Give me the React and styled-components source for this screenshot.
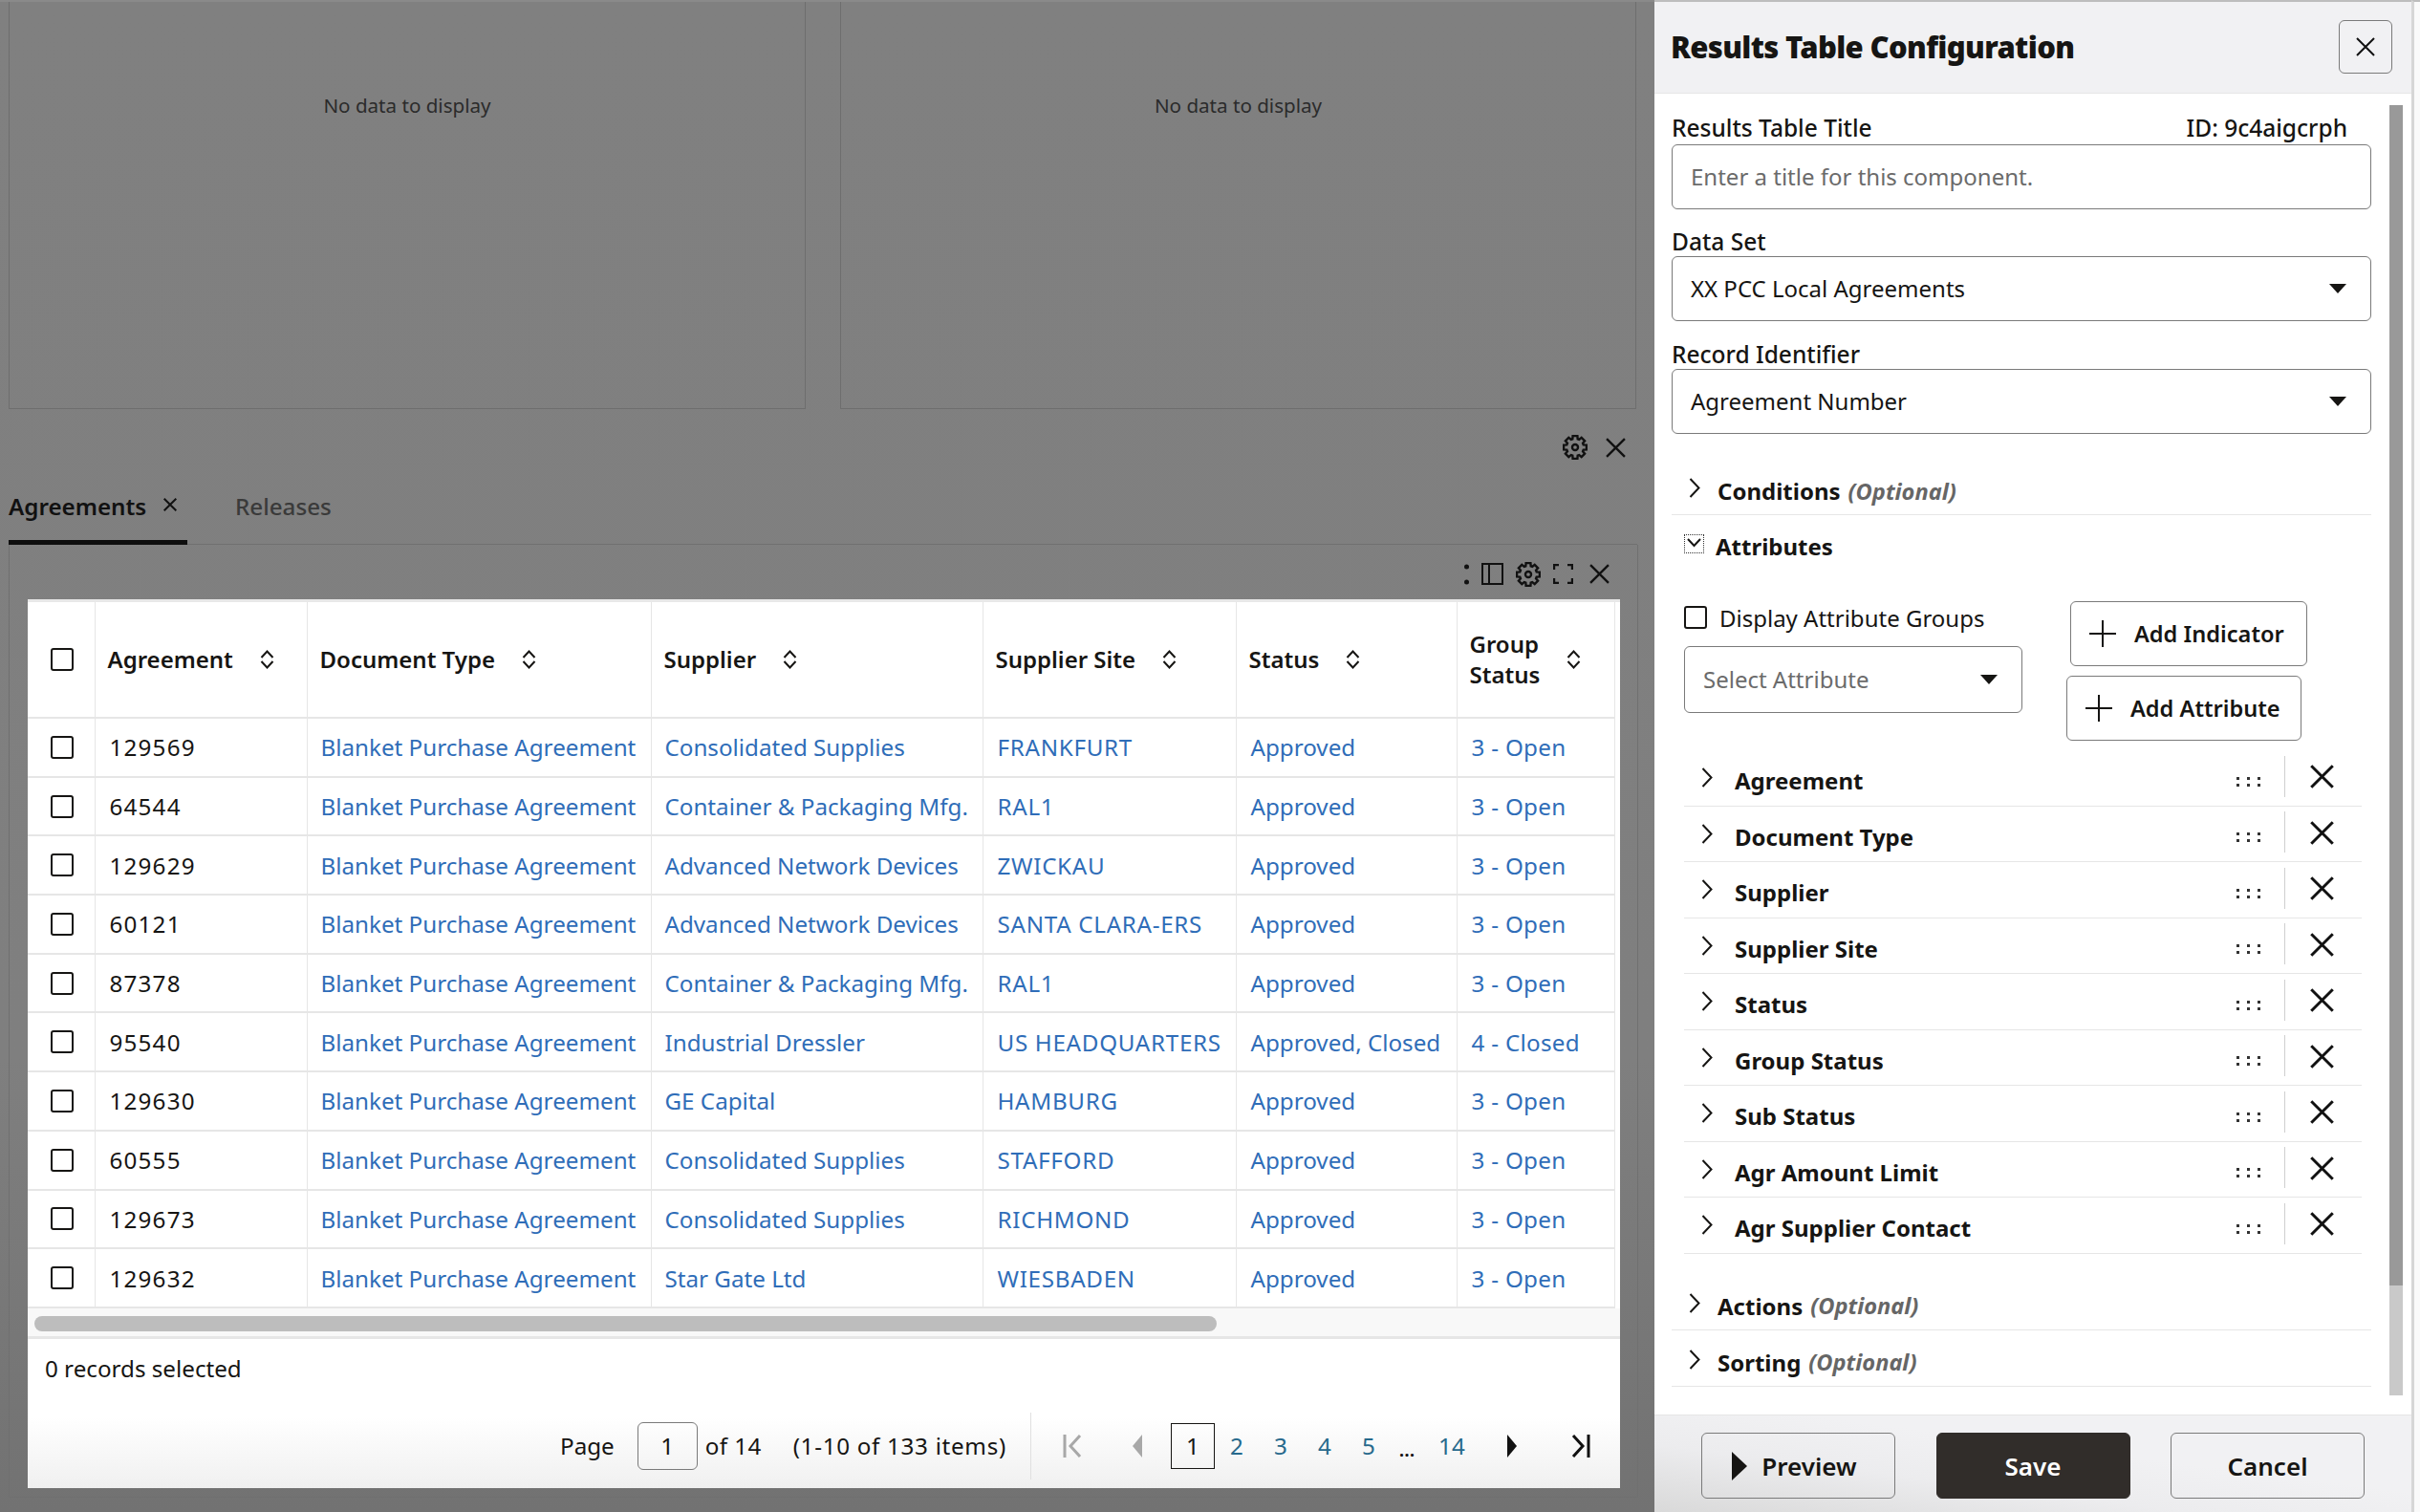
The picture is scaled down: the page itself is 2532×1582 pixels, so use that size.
import React from 'react'
import styled, { createGlobalStyle } from 'styled-components'

const FONT = '"Noto Sans", "Open Sans", sans-serif'

const rows = [
  ['129569', 'Consolidated Supplies', 'FRANKFURT', 'Approved', '3 - Open'],
  ['64544', 'Container & Packaging Mfg.', 'RAL1', 'Approved', '3 - Open'],
  ['129629', 'Advanced Network Devices', 'ZWICKAU', 'Approved', '3 - Open'],
  ['60121', 'Advanced Network Devices', 'SANTA CLARA-ERS', 'Approved', '3 - Open'],
  ['87378', 'Container & Packaging Mfg.', 'RAL1', 'Approved', '3 - Open'],
  ['95540', 'Industrial Dressler', 'US HEADQUARTERS', 'Approved, Closed', '4 - Closed'],
  ['129630', 'GE Capital', 'HAMBURG', 'Approved', '3 - Open'],
  ['60555', 'Consolidated Supplies', 'STAFFORD', 'Approved', '3 - Open'],
  ['129673', 'Consolidated Supplies', 'RICHMOND', 'Approved', '3 - Open'],
  ['129632', 'Star Gate Ltd', 'WIESBADEN', 'Approved', '3 - Open'],
]

const columns = [
  { title: 'Agreement', width: 222 },
  { title: 'Document Type', width: 360 },
  { title: 'Supplier', width: 347 },
  { title: 'Supplier Site', width: 265 },
  { title: 'Status', width: 231 },
  { title: <>Group<br />Status</>, width: 165 },
]

const attributes = ['Agreement', 'Document Type', 'Supplier', 'Supplier Site', 'Status', 'Group Status', 'Sub Status', 'Agr Amount Limit', 'Agr Supplier Contact']

const GlobalStyle = createGlobalStyle`
  html, body { margin: 0; padding: 0; }
  body { font-family: ${FONT}; color: #161513; }
  * { box-sizing: border-box; }
`

const Page = styled.div`
  width: 2532px;
  height: 1582px;
  overflow: hidden;
  display: flex;
  background: linear-gradient(#808080 0, #7f7f7f 70%, #727272 100%);
`

const Backdrop = styled.main`
  width: 1731px;
  flex: none;
  padding-left: 9px;
  padding-right: 18px;
  border-top: 2px solid #8a8a8a;
`

const ChartRow = styled.div`
  display: flex;
  gap: 36px;
  height: 426px;
`

const ChartPanel = styled.section`
  width: ${p => p.$w}px;
  border: 1px solid #6e6e6e;
  border-top: 0;
  padding-top: 94px;
  text-align: center;
  font-size: 20.6px;
  line-height: 28px;
  color: #2b2b2b;
`

const IconRow = styled.div`
  height: 80px;
  display: flex;
  justify-content: flex-end;
  align-items: center;
  gap: 19px;
  padding-right: 12px;
`

const Tabs = styled.div`
  display: flex;
  height: 62px;
  border-bottom: 1px solid #707070;
`

const Tab = styled.div`
  width: ${p => p.$w}px;
  height: 62px;
  display: flex;
  align-items: flex-start;
  padding-top: 6px;
  padding-left: ${p => p.$pad || 0}px;
  font-size: 24.2px;
  line-height: 32px;
  font-weight: ${p => (p.$active ? 600 : 500)};
  color: ${p => (p.$active ? '#111' : '#3a3a3a')};
  border-bottom: ${p => (p.$active ? '5px solid #0e0e0e' : '0')};
  gap: 18px;
  svg { margin-top: 7px; }
`

const ResultsBox = styled.section`
  width: 1705px;
  height: 997px;
  border: 1px solid #707070;
  border-top: 0;
  padding: 0 19px;
`

const BoxTools = styled.div`
  height: 57px;
  display: flex;
  justify-content: flex-end;
  align-items: center;
  gap: 13px;
  padding-right: 10px;
  padding-top: 4px;
`

const ToolClose = styled.span`
  display: flex;
  margin-left: 4px;
`

const Card = styled.div`
  width: 1666px;
  height: 930px;
  background: linear-gradient(#fff 0, #fff 92%, #f0f0f0 100%);
  border-top: 3px solid #e8e8e8;
  display: flex;
  flex-direction: column;
`

const Table = styled.table`
  border-collapse: collapse;
  table-layout: fixed;
  width: 1660px;
  font-size: 24.2px;
`

const Col = styled.col`
  width: ${p => p.$w}px;
`

const Th = styled.th`
  height: 121px;
  padding: 0 0 0 ${p => p.$pad || 13}px;
  border-right: 1px solid #e6e6e6;
  border-bottom: 2px solid #e6e6e6;
  text-align: left;
  font-weight: 600;
  font-size: 24px;
  line-height: 32px;
`

const HeadInner = styled.div`
  display: flex;
  align-items: center;
  gap: 28px;
`

const Td = styled.td`
  height: 61.7px;
  padding: 0 0 0 ${p => p.$pad || 14}px;
  border-right: 1px solid #e6e6e6;
  border-bottom: 2px solid #e6e6e6;
  white-space: nowrap;
  overflow: hidden;
  letter-spacing: ${p => p.$track || 0}px;
  color: ${p => (p.$link ? '#2f6db8' : '#161513')};
`

const Checkbox = styled.span`
  display: block;
  flex: none;
  width: 24px;
  height: 24px;
  border: 2px solid #161513;
  border-radius: 3px;
  background: #fff;
`

const ScrollTrack = styled.div`
  height: 32px;
  background: #f8f8f8;
  border-bottom: 3px solid #e6e6e6;
  padding: 8px 7px 0;
`

const ScrollThumb = styled.div`
  width: 1237px;
  height: 16px;
  border-radius: 8px;
  background: #bdbdbd;
`

const Selected = styled.div`
  padding: 15px 0 0 18px;
  font-size: 24.2px;
  line-height: 32px;
`

const Pager = styled.div`
  display: flex;
  align-items: center;
  height: 70px;
  margin-top: 30px;
  padding-left: 557px;
  font-size: 24.2px;
`

const PageInput = styled.div`
  width: 63px;
  height: 50px;
  margin: 0 8px 0 24px;
  border: 1px solid #7a7a7a;
  border-radius: 6px;
  display: flex;
  align-items: center;
  justify-content: center;
`

const PageOf = styled.span`
  letter-spacing: 0.4px;
`

const PageCount = styled.span`
  margin-left: 33px;
  padding-right: 25px;
  height: 70px;
  line-height: 70px;
  letter-spacing: 0.7px;
  border-right: 1px solid #e0e0e0;
`

const PagerNav = styled.div`
  display: flex;
  align-items: center;
  margin-left: 32px;
`

const NavIcon = styled.span`
  display: flex;
  justify-content: center;
  width: ${p => p.$w}px;
  padding-left: ${p => p.$pad || 0}px;
`

const PageNumber = styled.span`
  width: ${p => p.$w || 46}px;
  height: 48px;
  display: flex;
  align-items: center;
  justify-content: center;
  color: ${p => (p.$current ? '#161513' : '#27698c')};
  border: ${p => (p.$current ? '1px solid #161513' : '0')};
`

const Ellipsis = styled.span`
  width: 34px;
  text-align: center;
  font-weight: 600;
  font-size: 20px;
  padding-top: 8px;
`

const Drawer = styled.aside`
  width: 792px;
  height: 1582px;
  flex: none;
  border-top: 2px solid #bdbdbd;
  background: #fff;
  display: flex;
  flex-direction: column;
  position: relative;
`

const DrawerEdge = styled.div`
  flex: 1;
  background: #fafafa;
  border-left: 3px solid #d6d6d6;
  border-top: 2px solid #bdbdbd;
`

const DrawerHeader = styled.header`
  height: 96px;
  flex: none;
  background: #f1f1f3;
  border-bottom: 1px solid #e6e6e6;
  display: flex;
  align-items: center;
  justify-content: space-between;
  padding: 0 20px 2px 17px;
`

const DrawerTitle = styled.h1`
  margin: 0;
  font-size: 31px;
  font-weight: 900;
  letter-spacing: -0.65px;
`

const CloseButton = styled.div`
  width: 56px;
  height: 56px;
  border: 1px solid #7a7a7a;
  border-radius: 6px;
  display: flex;
  align-items: center;
  justify-content: center;
`

const DrawerBody = styled.div`
  height: 1382px;
  padding: 21px 42px 0 18px;
`

const ScrollRail = styled.div`
  position: absolute;
  top: 108px;
  right: 9px;
  width: 14px;
  height: 1350px;
  background: #c9c9c9;
`

const ScrollRailThumb = styled.div`
  height: 1235px;
  background: #999;
`

const LabelRow = styled.div`
  display: flex;
  justify-content: space-between;
  padding-right: 25px;
  font-size: 24.5px;
  line-height: 30px;
  font-weight: 500;
  height: ${p => p.$h || 30}px;
`

const Field = styled.div`
  height: ${p => p.$h || 68}px;
  width: ${p => p.$w || 732}px;
  margin-bottom: ${p => p.$mb || 0}px;
  border: 1px solid #7a7a7a;
  border-radius: 6px;
  display: flex;
  align-items: center;
  justify-content: space-between;
  padding: 0 25px 2px 19px;
  font-size: 24px;
  color: ${p => (p.$muted ? '#6b6b6b' : '#161513')};
`

const Caret = styled.span`
  width: 0;
  height: 0;
  margin-top: 2px;
  border-left: 9px solid transparent;
  border-right: 9px solid transparent;
  border-top: 10px solid #161513;
`

const Section = styled.div`
  height: ${p => p.$h}px;
  padding-top: ${p => p.$h - 50}px;
  width: 732px;
  display: flex;
  align-items: center;
  gap: 18px;
  padding-left: 18px;
  font-size: 24px;
  font-weight: 700;
  border-bottom: ${p => (p.$open ? '0' : '1px solid #e6e6e6')};
`

const Optional = styled.em`
  font-size: 23.6px;
  font-weight: 700;
  color: #666;
  margin-left: -10px;
`

const FocusBox = styled.span`
  width: 19px;
  height: 18px;
  outline: 1px dotted #333;
  display: flex;
  margin-top: -4px;
  margin-left: -4px;
  margin-right: -5px;
`

const AttrTools = styled.div`
  display: grid;
  grid-template-columns: 354px 1fr;
  column-gap: 46px;
  margin: 33px 0 10px 13px;
`

const CheckRow = styled.label`
  display: flex;
  align-items: center;
  gap: 13px;
  height: 30px;
  margin: 2px 0 15px;
  font-size: 24px;
`

const ButtonStack = styled.div`
  display: flex;
  flex-direction: column;
  gap: 10px;
`

const AddButton = styled.div`
  width: ${p => p.$w}px;
  height: 68px;
  margin-left: ${p => p.$ml || 0}px;
  border: 1px solid #7a7a7a;
  border-radius: 6px;
  display: flex;
  align-items: center;
  gap: 19px;
  padding-left: 19px;
  font-size: 23.6px;
  font-weight: 600;
`

const AttrList = styled.div`
  margin-left: 13px;
  width: 709px;
`

const AttrRow = styled.div`
  height: 58.5px;
  display: flex;
  align-items: center;
  border-bottom: 1px solid #e6e6e6;
  padding-left: 18px;
  font-size: 24px;
  font-weight: 700;
`

const AttrName = styled.span`
  flex: 1;
  margin-left: 23px;
  padding-top: 6px;
`

const Grip = styled.span`
  display: flex;
  padding-top: 8px;
`

const AttrDivider = styled.span`
  width: 1px;
  height: 43px;
  background: #cfcfcf;
  margin: -3px 18px 0 25px;
`

const RemoveSlot = styled.span`
  display: flex;
  width: 40px;
  justify-content: center;
  margin-top: -2px;
  margin-right: 22px;
`

const DrawerFooter = styled.footer`
  height: 102px;
  flex: none;
  background: linear-gradient(to top right, #d9d9d9 0, #ececee 35%, #f1f1f3 60%);
  border-top: 1px solid #e6e6e6;
  display: flex;
  gap: 42.5px;
  padding: 18px 0 0 49px;
`

const FooterButton = styled.div`
  width: 203px;
  height: 69px;
  border-radius: 6px;
  border: 1px solid ${p => (p.$primary ? '#312d2a' : '#7a7a7a')};
  background: ${p => (p.$primary ? '#312d2a' : 'transparent')};
  color: ${p => (p.$primary ? '#fff' : '#161513')};
  display: flex;
  align-items: center;
  justify-content: center;
  gap: 15px;
  padding-right: ${p => p.$shift || 0}px;
  font-size: 26px;
  font-weight: 600;
`

const ChevronSvg = styled.svg`
  flex: none;
  margin-top: ${p => p.$lift || 0}px;
`

const X = ({ size = 20, w = 2.4 }) => (
  <svg width={size} height={size} viewBox="0 0 20 20" fill="none" stroke="#111" strokeWidth={w * 20 / size}>
    <path d="M1 1 L19 19 M19 1 L1 19" />
  </svg>
)

const gearPath = (() => {
  const pts = []
  for (let i = 0; i < 8; i++) {
    const a = (i * Math.PI) / 4
    ;[[-0.3, 8.4], [-0.2, 11.2], [0.2, 11.2], [0.3, 8.4]].forEach(([da, r]) => {
      pts.push(`${(12 + r * Math.sin(a + da)).toFixed(2)} ${(12 - r * Math.cos(a + da)).toFixed(2)}`)
    })
  }
  return `M${pts.join(' L')} Z`
})()

const Gear = () => (
  <svg width="26" height="26" viewBox="0 0 24 24" fill="none" stroke="#111" strokeWidth="2.2">
    <path d={gearPath} strokeLinejoin="miter" />
    <circle cx="12" cy="12" r="2.8" />
  </svg>
)

const Sort = () => (
  <svg width="15" height="20" viewBox="0 0 15 20" fill="none" stroke="#161513" strokeWidth="2">
    <path d="M1.5 8 L7.5 1.5 L13.5 8 M1.5 12 L7.5 18.5 L13.5 12" />
  </svg>
)

const Chevron = ({ lift }) => (
  <ChevronSvg $lift={lift} width="12" height="21" viewBox="0 0 12 21" fill="none" stroke="#161513" strokeWidth="2">
    <path d="M1.5 1 L10.5 10.5 L1.5 20" />
  </ChevronSvg>
)

const Plus = () => (
  <svg width="28" height="28" viewBox="0 0 28 28" stroke="#161513" strokeWidth="2">
    <path d="M14 0 V28 M0 14 H28" />
  </svg>
)

const Dots = () => (
  <svg width="25" height="10" viewBox="0 0 25 10" fill="#333">
    {[0, 11, 22].flatMap(x => [0, 7].map(y => <rect key={`${x}-${y}`} x={x} y={y} width="3" height="3" />))}
  </svg>
)

const SelectField = ({ children, ...rest }) => (
  <Field {...rest}>
    <span>{children}</span>
    <Caret />
  </Field>
)

export default function App() {
  return (
    <Page>
      <GlobalStyle />
      <Backdrop>
        <ChartRow>
          <ChartPanel $w={834}>No data to display</ChartPanel>
          <ChartPanel $w={833}>No data to display</ChartPanel>
        </ChartRow>
        <IconRow>
          <Gear />
          <X size={21} />
        </IconRow>
        <Tabs>
          <Tab $active $w={187}>Agreements <X size={14} w={2} /></Tab>
          <Tab $w={200} $pad={50}>Releases</Tab>
        </Tabs>
        <ResultsBox>
          <BoxTools>
            <svg width="5" height="22" viewBox="0 0 5 22" fill="#111"><circle cx="2.5" cy="3" r="2.5" /><circle cx="2.5" cy="19" r="2.5" /></svg>
            <svg width="23" height="23" viewBox="0 0 23 23" fill="none" stroke="#111" strokeWidth="2"><rect x="1" y="1" width="21" height="21" /><path d="M8 1 V22" /></svg>
            <Gear />
            <svg width="21" height="21" viewBox="0 0 21 21" fill="none" stroke="#111" strokeWidth="2.4"><path d="M1 6 V1 H6 M15 1 H20 V6 M20 15 V20 H15 M6 20 H1 V15" /></svg>
            <ToolClose><X size={21} /></ToolClose>
          </BoxTools>
          <Card>
            <Table>
              <colgroup>
                <Col $w={70} />
                {columns.map((c, i) => <Col key={i} $w={c.width} />)}
              </colgroup>
              <thead>
                <tr>
                  <Th $pad={24}><Checkbox /></Th>
                  {columns.map((c, i) => (
                    <Th key={i}>
                      <HeadInner><span>{c.title}</span><Sort /></HeadInner>
                    </Th>
                  ))}
                </tr>
              </thead>
              <tbody>
                {rows.map(r => (
                  <tr key={r[0]}>
                    <Td $pad={24}><Checkbox /></Td>
                    <Td $pad={15} $track={1.2}>{r[0]}</Td>
                    <Td $link>Blanket Purchase Agreement</Td>
                    <Td $link>{r[1]}</Td>
                    <Td $link $pad={15} $track={0.7}>{r[2]}</Td>
                    <Td $link $pad={15}>{r[3]}</Td>
                    <Td $link $pad={15} $track={0.3}>{r[4]}</Td>
                  </tr>
                ))}
              </tbody>
            </Table>
            <ScrollTrack><ScrollThumb /></ScrollTrack>
            <Selected>0 records selected</Selected>
            <Pager>
              <span>Page</span>
              <PageInput>1</PageInput>
              <PageOf>of 14</PageOf>
              <PageCount>(1-10 of 133 items)</PageCount>
              <PagerNav>
                <NavIcon $w={22}>
                  <svg width="20" height="24" viewBox="0 0 20 24" fill="none" stroke="#a8a8a8" strokeWidth="3"><path d="M2 0 V24 M18 1 L8 12 L18 23" /></svg>
                </NavIcon>
                <NavIcon $w={92} $pad={22}>
                  <svg width="11" height="24" viewBox="0 0 11 24" fill="#a8a8a8"><path d="M11 0 V24 L1 12 Z" /></svg>
                </NavIcon>
                <PageNumber $current>1</PageNumber>
                <PageNumber>2</PageNumber>
                <PageNumber>3</PageNumber>
                <PageNumber>4</PageNumber>
                <PageNumber>5</PageNumber>
                <Ellipsis>...</Ellipsis>
                <PageNumber $w={60}>14</PageNumber>
                <NavIcon $w={68}>
                  <svg width="11" height="24" viewBox="0 0 11 24" fill="#111"><path d="M0 0 V24 L10 12 Z" /></svg>
                </NavIcon>
                <NavIcon $w={74}>
                  <svg width="20" height="24" viewBox="0 0 20 24" fill="none" stroke="#111" strokeWidth="3"><path d="M18 0 V24 M2 1 L12 12 L2 23" /></svg>
                </NavIcon>
              </PagerNav>
            </Pager>
          </Card>
        </ResultsBox>
      </Backdrop>
      <Drawer>
        <DrawerHeader>
          <DrawerTitle>Results Table Configuration</DrawerTitle>
          <CloseButton><X size={20} w={2} /></CloseButton>
        </DrawerHeader>
        <DrawerBody>
          <LabelRow $h={32}><span>Results Table Title</span><span>ID: 9c4aigcrph</span></LabelRow>
          <Field $muted $mb={19}>Enter a title for this component.</Field>
          <LabelRow>Data Set</LabelRow>
          <SelectField $mb={20}>XX PCC Local Agreements</SelectField>
          <LabelRow>Record Identifier</LabelRow>
          <SelectField>Agreement Number</SelectField>
          <Section $h={85}><Chevron lift={-6} /><span>Conditions</span><Optional>(Optional)</Optional></Section>
          <Section $h={57} $open>
            <FocusBox>
              <svg width="19" height="18" viewBox="0 0 19 18" fill="none" stroke="#161513" strokeWidth="2"><path d="M3 4 L9.5 11 L16 4" /></svg>
            </FocusBox>
            <span>Attributes</span>
          </Section>
          <AttrTools>
            <div>
              <CheckRow><Checkbox />Display Attribute Groups</CheckRow>
              <SelectField $w={354} $h={70} $muted>Select Attribute</SelectField>
            </div>
            <ButtonStack>
              <AddButton $ml={4} $w={248}><Plus />Add Indicator</AddButton>
              <AddButton $w={246}><Plus />Add Attribute</AddButton>
            </ButtonStack>
          </AttrTools>
          <AttrList>
            {attributes.map(a => (
              <AttrRow key={a}>
                <Chevron />
                <AttrName>{a}</AttrName>
                <Grip><Dots /></Grip>
                <AttrDivider />
                <RemoveSlot><X size={25} w={3} /></RemoveSlot>
              </AttrRow>
            ))}
          </AttrList>
          <Section $h={80}><Chevron lift={-6} /><span>Actions</span><Optional>(Optional)</Optional></Section>
          <Section $h={59}><Chevron lift={-6} /><span>Sorting</span><Optional>(Optional)</Optional></Section>
        </DrawerBody>
        <DrawerFooter>
          <FooterButton $shift={8}>
            <svg width="16" height="30" viewBox="0 0 16 30" fill="#161513"><path d="M0 0 V30 L16 15 Z" /></svg>
            Preview
          </FooterButton>
          <FooterButton $primary>Save</FooterButton>
          <FooterButton>Cancel</FooterButton>
        </DrawerFooter>
        <ScrollRail><ScrollRailThumb /></ScrollRail>
      </Drawer>
      <DrawerEdge />
    </Page>
  )
}
